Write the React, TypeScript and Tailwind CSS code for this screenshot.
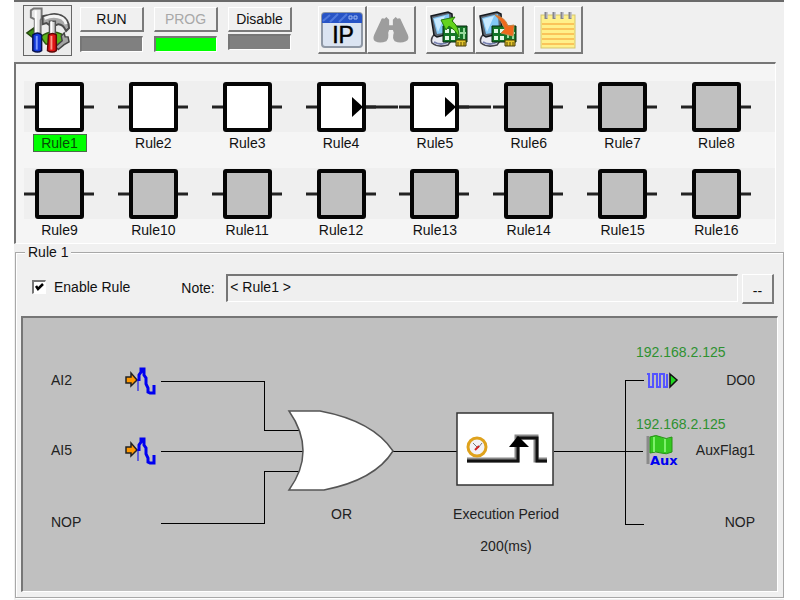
import React, { useState } from 'react';

type Rule = { id: number; active: boolean; chained?: boolean };

const RULES: Rule[] = Array.from({ length: 16 }, (_, i) => ({
  id: i + 1,
  active: i < 5,
  chained: i === 3 || i === 4,
}));

const raised = 'border-t border-l border-r-2 border-b-2 border-t-white border-l-white border-r-[#7a7a7a] border-b-[#7a7a7a]';
const sunken = 'border-t-2 border-l-2 border-r border-b border-t-[#767676] border-l-[#767676] border-r-white border-b-white';

function ToolsIcon() {
  return (
    <svg width="48" height="50" viewBox="0 0 48 50">
      <path d="M3 27 L10 22 L12 33 L8 31 Z" fill="#3f8d12" stroke="#24480c" strokeWidth="1.5" />
      <path d="M17 31 Q27 23 38 28 L42 34 Q34 43 22 38 Z" fill="#5cb31c" stroke="#2c5c10" strokeWidth="1.5" />
      <path d="M32 41 L39 35 L38 30 L41 27 L42 31 L45 31 L46 36 L41 39 L35 44 Z" fill="#a4a4a4" stroke="#444" strokeWidth="1.5" />
      <path d="M7 4 L10 2 H18 V12 L17 14 V29 H11 V13 L7 11 Z" fill="#e6e6e6" stroke="#777" strokeWidth="2" />
      <path d="M12 4 V28" stroke="#fff" strokeWidth="2" />
      <path d="M9 29 Q14 25 18 29 V45 Q14 48 9 45 Z" fill="#1238d8" stroke="#07124e" strokeWidth="1.5" />
      <path d="M13 30 V44" stroke="#7d9aff" strokeWidth="2" />
      <path d="M19 10 L24 9 Q31 6 38 9 Q46 13 46 22 L43 25 Q40 18 35 18 L33 19 H26 L23 17 L19 18 Z" fill="#a9a9a9" stroke="#4b4b4b" strokeWidth="2" />
      <path d="M21 12 Q31 8 39 12 Q42 14 43 18" fill="none" stroke="#f4f4f4" strokeWidth="3" />
      <path d="M26 15 H32 V29 H26 Z" fill="#d2d2d2" stroke="#555" strokeWidth="1.5" />
      <path d="M28 15 V28" stroke="#fff" strokeWidth="2" />
      <path d="M25 29 Q29 26 33 29 V45 Q29 48 24 45 Z" fill="#e01515" stroke="#5e0707" strokeWidth="1.5" />
      <path d="M28 30 V44" stroke="#ff9a8a" strokeWidth="2" />
    </svg>
  );
}

function IpIcon() {
  return (
    <svg width="42" height="38" viewBox="0 0 42 38">
      <rect x="1" y="2" width="40" height="34" rx="3" fill="#dbe4f2" stroke="#8f98a5" strokeWidth="2" />
      <path d="M1 12 V5 Q1 2 4 2 H38 Q41 2 41 5 V12 Z" fill="#2854c6" />
      <path d="M2 10 L9 4 M9 11 L17 3 M18 11 L26 3" stroke="#5079dc" strokeWidth="2" />
      <path d="M28 5 h3 v3 h-3z M33 5 h3 v3 h-3z" fill="none" stroke="#9db8f2" />
      <text x="22" y="32" textAnchor="middle" fontSize="23" fontFamily="Liberation Sans, sans-serif" fill="#000" stroke="#000" strokeWidth="0.5">IP</text>
    </svg>
  );
}

function BinocularsIcon() {
  return (
    <svg width="38" height="28" viewBox="0 0 40 30" fill="#9d9d9d">
      <path d="M9 5 Q10 1 13 3 L15 1 L18 4 V10 H22 V4 L25 1 L27 3 Q30 1 31 5 L38 20 Q40 25 36 27 Q30 30 24 27 Q21 24 23 18 L22 15 H18 L17 18 Q18 24 15 27 Q8 30 3 27 Q0 25 2 20 Z" />
    </svg>
  );
}

function TransferIcon({ download = false }: { download?: boolean }) {
  return (
    <svg width="40" height="38" viewBox="0 0 40 38">
      <path d="M5 23 Q0 27 2 32 Q8 37 18 34 L21 30 L18 22 Z" fill="#e9eaf3" stroke="#44444c" strokeWidth="1.5" />
      <path d="M4 31 Q11 35 18 31" fill="none" stroke="#7881b0" strokeWidth="2" />
      <path d="M1 5 L18 1 L22 3 L23 22 L7 26 L4 24 Z" fill="#5b6470" stroke="#15181d" strokeWidth="1.5" />
      <path d="M3 7 L19 3 L20 21 L7 23 Z" fill="#83c8f6" />
      <path d="M4 8 L15 5 L8 21 Z" fill="#c9eaff" />
      <path d="M13 15 H37 V31 H13 Z" fill="#157528" stroke="#06280c" />
      <path d="M15 18 h4 v4 h-4z M21 18 h4 v4 h-4z M15 25 h4 v4 h-4z M21 25 h4 v4 h-4z" fill="#e4f8e6" />
      <path d="M29 17 V27 M34 17 V28 M28 22 H36" stroke="#9ad89e" strokeWidth="2" />
      <path d="M26 29 H36 V35 H26 Z" fill="#e5c62d" stroke="#463a06" />
      <path d="M28 31 V35 M31 31 V35 M34 31 V35" stroke="#574806" />
      {download ? (
        <path d="M16 4 Q26 6 29 15 L35 14 L34 25 L22 22 L26 18 Q23 10 16 4 Z" fill="#f0681c" stroke="#c98746" />
      ) : (
        <path d="M11 9 L25 6 L22 10 Q29 15 29 26 Q25 18 19 15 L16 19 Z" fill="#63d31e" stroke="#277c0a" />
      )}
    </svg>
  );
}

function NotepadIcon() {
  return (
    <svg width="38" height="38" viewBox="0 0 38 38">
      <rect x="2" y="4" width="34" height="33" fill="#fff08a" stroke="#d3c56e" />
      <path d="M3 13 H35 M3 18 H35 M3 23 H35 M3 28 H35 M3 33 H35" stroke="#fac45a" strokeWidth="2" />
      <path d="M7 1 V8 M15 1 V8 M23 1 V8 M31 1 V8" stroke="#85858e" strokeWidth="3" />
      <path d="M8 1 V7 M16 1 V7 M24 1 V7 M32 1 V7" stroke="#d6d6de" />
    </svg>
  );
}

function ModeButton({ label, lamp, disabled, tight }: { label: string; lamp: string; disabled?: boolean; tight?: boolean }) {
  return (
    <div className={`flex w-16 flex-col ${tight ? 'gap-[2px]' : 'gap-1'}`}>
      <button type="button" disabled={disabled} className={`h-[25px] bg-[#f0f0f0] leading-4 disabled:text-[#a8a8a8] ${raised}`}>
        {label}
      </button>
      <div className={`mr-px h-4 ${lamp} ${sunken}`} />
    </div>
  );
}

function ToolButton({ label, children }: { label: string; children: React.ReactNode }) {
  return (
    <button type="button" aria-label={label} className={`flex h-12 w-[49px] items-center justify-center bg-[#f0f0f0] ${raised}`}>
      {children}
    </button>
  );
}

function RuleBlock({ rule, selected, onSelect }: { rule: Rule; selected: boolean; onSelect: () => void }) {
  return (
    <button type="button" onClick={onSelect} className="flex w-[71px] flex-col items-center gap-[2px]">
      <svg width="71" height="51" viewBox="0 0 71 51" className="overflow-visible">
        <path d="M0 26 H12 M59 26 H70" stroke="#222" strokeWidth="3" />
        {rule.chained && <path d="M59 26 H92" stroke="#222" strokeWidth="3" />}
        <rect x="13" y="3" width="45" height="46" rx="1" fill={rule.active ? '#fff' : '#c0c0c0'} stroke="#050505" strokeWidth="4" />
        {rule.chained && <path d="M46 16 L57 26 L46 36 Z" fill="#000" />}
      </svg>
      <span className={`h-[18px] w-[54px] border leading-4 ${selected ? 'border-[#4a6a4a] bg-[#00ff00] text-[#064d06]' : 'border-transparent'}`}>
        Rule{rule.id}
      </span>
    </button>
  );
}

function AnalogInput({ y }: { y: number }) {
  return (
    <g transform={`translate(102 ${y})`}>
      <path d="M1 10 H6 V6 L12 13 L6 19 V16 H1 Z" fill="#ff9800" stroke="#222" strokeWidth="1.5" />
      <path d="M13 24 V12" stroke="#0000f0" />
      <path d="M14 14 V8 L16 5 V2 H19 V8 L21 11 V17 L23 21 V25 L25 26 H29 V18" fill="none" stroke="#0000f0" strokeWidth="3" />
    </g>
  );
}

function RuleDiagram() {
  return (
    <div className={`relative h-[276px] overflow-hidden bg-[#c0c0c0] text-[#222] ${sunken}`}>
      <svg width="754" height="273" viewBox="0 0 754 273" fill="none">
        <AnalogInput y={49} />
        <AnalogInput y={119} />
        <g stroke="#000" shapeRendering="crispEdges">
          <path d="M138 63 H241 V112 H278" />
          <path d="M138 133 H282" />
          <path d="M138 205 H241 V153 H278" />
          <path d="M370 133 H434 M531 133 H620" />
          <path d="M621 62 H602 V206 H621" />
        </g>
        <path d="M266 93 H297 Q350 103 370 133 Q352 162 301 172 H266 Q294 133 266 93 Z" fill="#fff" stroke="#555" strokeWidth="1.5" />
        <rect x="434" y="95" width="96" height="72" fill="#fff" stroke="#333" strokeWidth="1.5" />
        <path d="M444 142 H494 V119 H513 V142 H524" stroke="#888" strokeWidth="5" />
        <path d="M444 143 H495 V120 H514 V143 H524" stroke="#111" strokeWidth="3" />
        <path d="M486 129 L495 118 L506 129 Z" fill="#000" />
        <circle cx="454" cy="129" r="9" fill="#f2f2f7" stroke="#dfa21c" strokeWidth="3" />
        <path d="M450 125 L455 130 L459 125" stroke="#777" />
        <path d="M452 132 L456 128" stroke="#d02020" strokeWidth="2" />
        <path d="M624 56 H626 V69 H630 V56 H634 V69 H637 V56 H641 V69 H644 V56" stroke="#5555ff" strokeWidth="2" />
        <path d="M647 56 L654 62 L647 69 Z" fill="#20d820" stroke="#111" strokeWidth="1.5" />
        <path d="M625 118 V146" stroke="#8a8a8a" strokeWidth="3" />
        <path d="M627 119 Q633 116 638 119 T649 119 V134 Q643 137 638 135 T627 135 Z" fill="#35c820" stroke="#269514" />
        <path d="M631 119 V134 M642 121 V134" stroke="#7df06a" strokeWidth="2" />
        <text x="627" y="147" fontSize="13" fontWeight="bold" fontFamily="DejaVu Sans, sans-serif" fill="#0000f0">Aux</text>
      </svg>
      <span className="absolute left-7 top-[54px]">AI2</span>
      <span className="absolute left-7 top-[124px]">AI5</span>
      <span className="absolute left-7 top-[196px]">NOP</span>
      <span className="absolute left-[308px] top-[188px]">OR</span>
      <div className="absolute left-[422px] top-[188px] flex w-[122px] flex-col items-center gap-4">
        <span>Execution Period</span>
        <span>200(ms)</span>
      </div>
      <span className="absolute left-[613px] top-[26px] text-[#2e9130]">192.168.2.125</span>
      <span className="absolute left-[613px] top-[98px] text-[#2e9130]">192.168.2.125</span>
      <span className="absolute left-[652px] top-[54px] w-20 text-right">DO0</span>
      <span className="absolute left-[652px] top-[124px] w-20 text-right">AuxFlag1</span>
      <span className="absolute left-[652px] top-[196px] w-20 text-right">NOP</span>
    </div>
  );
}

export default function App() {
  const [selected, setSelected] = useState(1);
  const [enabled, setEnabled] = useState(true);
  const [note, setNote] = useState('< Rule1 >');

  return (
    <div className="min-h-screen bg-white pl-[14px] pr-4 font-['Liberation_Sans',Arial,sans-serif] text-[14px] leading-4 text-[#111]">
      <div className="min-h-screen bg-[#f0f0f0]">
        <header className="flex h-[62px] items-start border-t-2 border-[#6a6a6a] pl-[9px] pt-[3px]">
          <button type="button" aria-label="Setup" className="mr-2 flex h-[51px] w-[49px] items-center justify-center border border-[#666] bg-[#ececec]">
            <ToolsIcon />
          </button>
          <div className="flex gap-[10px] pt-[2px]">
            <ModeButton label="RUN" lamp="bg-[#808080]" />
            <ModeButton label="PROG" lamp="bg-[#00ff00]" disabled />
            <ModeButton label="Disable" lamp="bg-[#808080]" tight />
          </div>
          <div className="ml-[26px] flex gap-[10px] pt-px">
            <div className="flex">
              <ToolButton label="IP settings"><IpIcon /></ToolButton>
              <ToolButton label="Search"><BinocularsIcon /></ToolButton>
            </div>
            <div className="flex">
              <ToolButton label="Upload"><TransferIcon /></ToolButton>
              <ToolButton label="Download"><TransferIcon download /></ToolButton>
            </div>
            <ToolButton label="Notes"><NotepadIcon /></ToolButton>
          </div>
        </header>

        <section className={`mr-2 flex h-[182px] flex-col gap-4 bg-[#f5f5f5] pl-2 pt-[17px] ${sunken}`}>
          {[RULES.slice(0, 8), RULES.slice(8)].map((row, i) => (
            <div key={i} className="flex justify-between bg-[linear-gradient(#efefef_51px,transparent_51px)] pr-[23px]">
              {row.map(rule => (
                <RuleBlock key={rule.id} rule={rule} selected={rule.id === selected} onSelect={() => setSelected(rule.id)} />
              ))}
            </div>
          ))}
        </section>

        <fieldset className="ml-px mr-px border border-[#a8a8a8] px-[5px] pb-[5px] shadow-[inset_1px_1px_0_#fff,1px_1px_0_#fff]">
          <legend className="ml-1 bg-[#f0f0f0] px-[3px]">Rule {selected}</legend>
          <div className="flex items-start pb-3 pl-[11px] pr-1 pt-[14px]">
            <label className="mt-[5px] flex items-center gap-2">
              <span className="relative flex">
                <input
                  type="checkbox"
                  checked={enabled}
                  onChange={e => setEnabled(e.target.checked)}
                  className={`h-[14px] w-[14px] appearance-none bg-white ${sunken}`}
                />
                {enabled && (
                  <svg width="14" height="14" viewBox="0 0 14 14" className="pointer-events-none absolute inset-0">
                    <path d="M4 6 L6 9 L11 4" fill="none" stroke="#000" strokeWidth="2.5" />
                  </svg>
                )}
              </span>
              Enable Rule
            </label>
            <label htmlFor="note" className="ml-[51px] mt-[6px] w-[45px]">Note:</label>
            <input
              id="note"
              value={note}
              onChange={e => setNote(e.target.value)}
              className={`h-7 min-w-0 flex-1 bg-[#efefef] px-[2px] pb-1 ${sunken}`}
            />
            <button type="button" aria-label="Edit note" className={`ml-1 h-[30px] w-8 bg-[#f0f0f0] pt-1 ${raised}`}>--</button>
          </div>
          <RuleDiagram />
        </fieldset>
      </div>
    </div>
  );
}
